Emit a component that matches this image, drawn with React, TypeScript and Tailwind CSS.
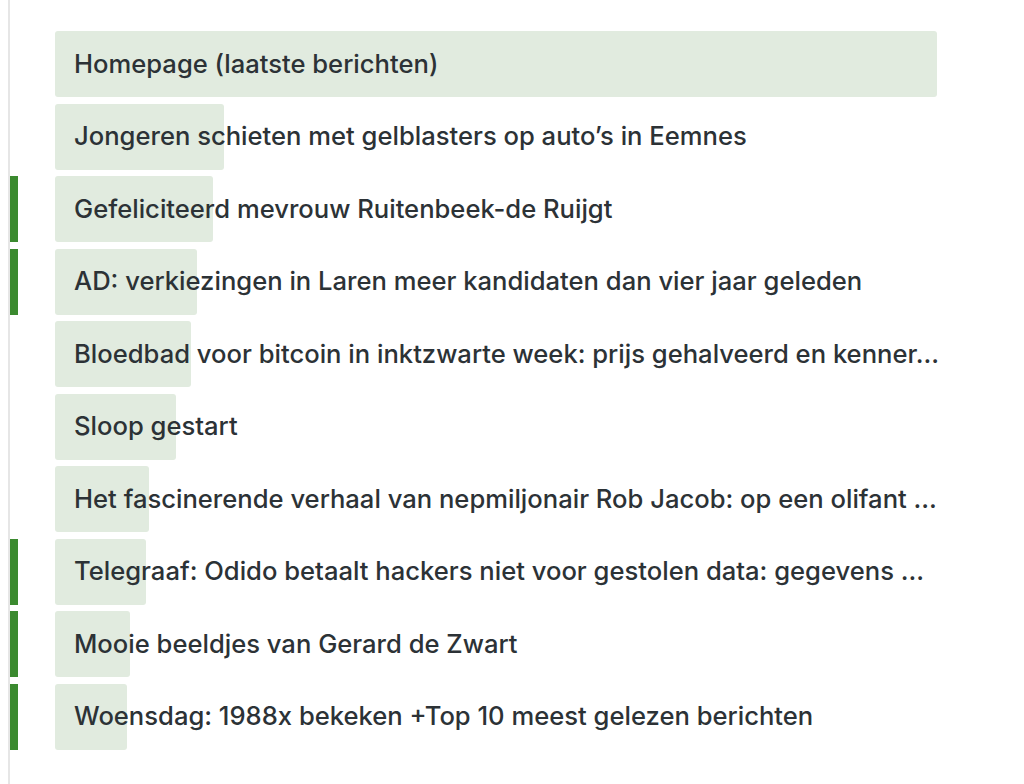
const items = [
  { title: 'Homepage (laatste berichten)', bar: 882, marked: false },
  { title: 'Jongeren schieten met gelblasters op auto’s in Eemnes', bar: 169, marked: false },
  { title: 'Gefeliciteerd mevrouw Ruitenbeek-de Ruijgt', bar: 158, marked: true },
  { title: 'AD: verkiezingen in Laren meer kandidaten dan vier jaar geleden', bar: 142, marked: true },
  { title: 'Bloedbad voor bitcoin in inktzwarte week: prijs gehalveerd en kenner…', bar: 136, marked: false },
  { title: 'Sloop gestart', bar: 121, marked: false },
  { title: 'Het fascinerende verhaal van nepmiljonair Rob Jacob: op een olifant …', bar: 94, marked: false },
  { title: 'Telegraaf: Odido betaalt hackers niet voor gestolen data: gegevens …', bar: 91, marked: true },
  { title: 'Mooie beeldjes van Gerard de Zwart', bar: 75, marked: true },
  { title: 'Woensdag: 1988x bekeken +Top 10 meest gelezen berichten', bar: 72, marked: true },
];

export default function App() {
  return (
    <div className="h-[784px] w-[1024px] bg-white pl-2 font-['Inter',sans-serif]">
      <div className="h-full border-l-2 border-[#e6e6e6] pt-[31px]">
        <ul className="flex flex-col gap-[6.5px]">
          {items.map((item) => (
            <li key={item.title} className="flex h-[66px] items-stretch">
              <div className={item.marked ? 'w-[8px] bg-[#3b8a2f]' : 'w-[8px]'} />
              <div className="relative ml-[37px] w-[882px]">
                <div
                  className="absolute inset-y-0 left-0 rounded-[3px] bg-[#e1ebdf]"
                  style={{ width: item.bar }}
                />
                <div className="relative flex h-full items-center pl-[19px]">
                  <span className="whitespace-nowrap text-[25.6px] font-medium text-[#2c3236]">{item.title}</span>
                </div>
              </div>
            </li>
          ))}
        </ul>
      </div>
    </div>
  );
}
